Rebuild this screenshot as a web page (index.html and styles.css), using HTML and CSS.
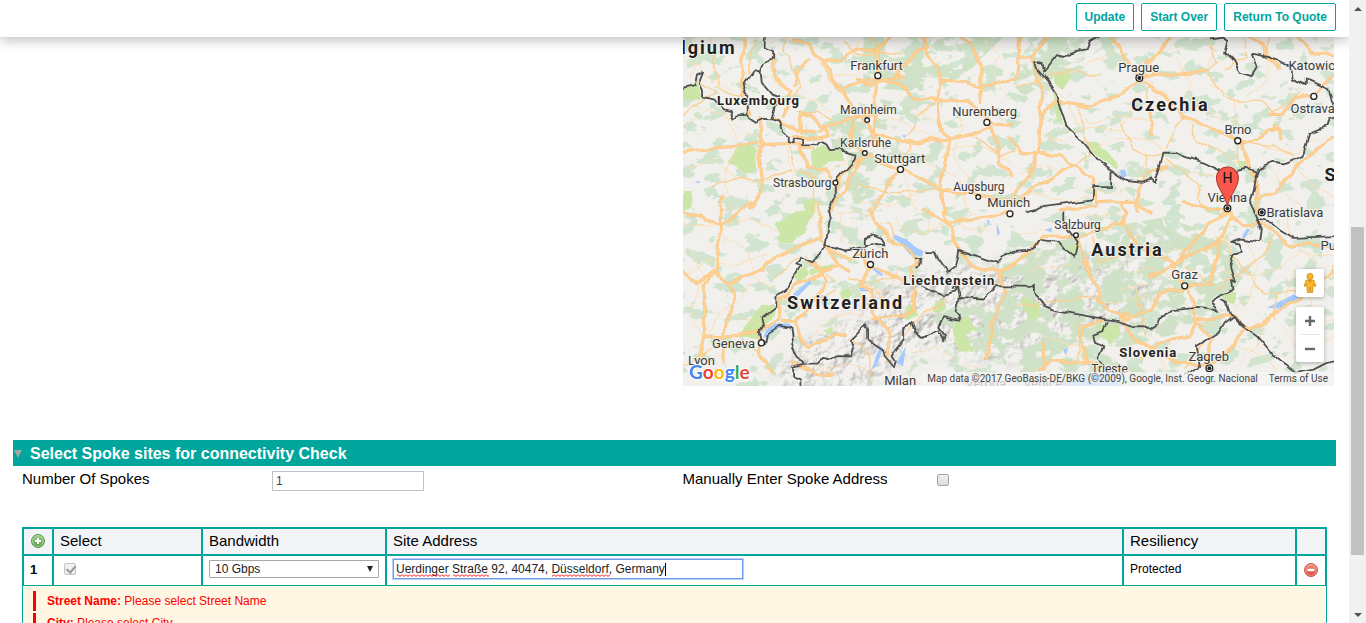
FILE: index.html
```html
<!DOCTYPE html>
<html lang="en">
<head>
<meta charset="utf-8">
<title>Connectivity Check</title>
<link rel="stylesheet" href="styles.css">
</head>
<body>
<div class="page">
  <header class="toolbar">
    <button type="button" class="action">Update</button>
    <button type="button" class="action">Start Over</button>
    <button type="button" class="action">Return To Quote</button>
  </header>
  <main class="content">
    <section class="columns map-row">
      <div class="cell"></div>
      <div class="cell map-cell">
        <div class="map">
          <svg class="map-art" viewBox="0 0 651 349" role="img" aria-label="Map of Central Europe">
            <defs>
              <filter id="woods" x="0" y="0" width="100%" height="100%" color-interpolation-filters="sRGB">
                <feTurbulence type="fractalNoise" baseFrequency="0.05 0.07" numOctaves="4" seed="11"/>
                <feColorMatrix values="0 0 0 0 0.82  0 0 0 0 0.896  0 0 0 0 0.81  22 0 0 0 -12.8"/>
                <feComposite in2="SourceGraphic" operator="in"/>
              </filter>
              <filter id="forest" x="0" y="0" width="100%" height="100%" color-interpolation-filters="sRGB">
                <feTurbulence type="fractalNoise" baseFrequency="0.05 0.07" numOctaves="4" seed="4"/>
                <feColorMatrix values="0 0 0 0 0.81  0 0 0 0 0.887  0 0 0 0 0.78  14 0 0 0 -6.3"/>
                <feComposite in2="SourceGraphic" operator="in"/>
              </filter>
              <filter id="relief" x="0" y="0" width="100%" height="100%" color-interpolation-filters="sRGB">
                <feTurbulence type="fractalNoise" baseFrequency="0.07" numOctaves="4" seed="8" result="n"/>
                <feDiffuseLighting in="n" surfaceScale="6" diffuseConstant="1.15" lighting-color="#ffffff">
                  <feDistantLight azimuth="225" elevation="58"/>
                </feDiffuseLighting>
                <feComposite in2="SourceGraphic" operator="in"/>
              </filter>
              <filter id="wander" filterUnits="userSpaceOnUse" x="-60" y="-60" width="2080" height="1180" color-interpolation-filters="sRGB">
                <feTurbulence type="fractalNoise" baseFrequency="0.025" numOctaves="1" seed="3"/>
                <feDisplacementMap in="SourceGraphic" scale="24" xChannelSelector="R" yChannelSelector="G"/>
                <feGaussianBlur stdDeviation="1"/>
              </filter>
              <filter id="soft"><feGaussianBlur stdDeviation="7"/></filter>
              <mask id="alps"><path filter="url(#soft)" fill="#fff" d="M125 300L165 285 195 252 240 235 270 230 330 225 400 215 450 222 480 240 460 275 420 290 370 300 330 325 290 322 245 310 215 325 190 349 95 349 95 330Z"/></mask>
            </defs>
            <rect width="651" height="349" fill="#f2f0ed"/>
            <rect width="651" height="349" filter="url(#woods)"/>
            <g mask="url(#alps)">
              <rect width="651" height="349" fill="#edebe7"/>
              <rect width="651" height="349" filter="url(#relief)" opacity=".3"/>
            </g>
            <path filter="url(#forest)" d="M320 225L400 195 480 180 540 200 560 240 520 290 440 310 390 305 500 349 330 349 310 300ZM180 0L320 0 280 40 235 55 180 50ZM165 115L190 115 185 160 165 175ZM145 85L185 75 180 110 150 115ZM190 60L230 70 210 95 190 90ZM325 40L360 0 440 0 380 35 340 60ZM250 280L300 255 330 260 310 320 260 300Z"/>

            <g transform="translate(0 -1) scale(.33333)">
              <g filter="url(#wander)" fill="#cbe6a6">
                <path d="M0 155L45 140 60 185 20 195 0 190ZM155 340L190 325 225 340 220 395 190 415 160 385 140 375ZM380 355L415 325 455 345 480 340 480 370 420 390 385 392ZM0 465L25 465 25 510 0 528ZM365 495L400 490 395 528 365 528Z"/>
                <path d="M275 560L310 540 345 525 390 525 365 590 325 620 280 615 295 585ZM180 875L235 810 270 800 275 835 240 870 225 905 170 900ZM335 720L370 685 380 705 350 745ZM465 770L500 752 508 780 480 795ZM385 695L450 685 445 700 380 715ZM425 880L448 872 450 895 430 895ZM665 815L690 800 700 845 670 850ZM745 810L780 785 785 820 760 830ZM820 850L860 835 880 880 850 900 870 950 830 945 810 890Z"/>
                <path d="M1110 120L1155 97 1165 130 1140 160 1110 140ZM1105 165L1125 195 1140 265 1120 245ZM1200 315L1250 320 1300 380 1300 402 1250 370ZM1665 375L1690 375 1690 390 1665 400ZM1240 870L1300 860 1315 890 1280 925 1250 895ZM1015 790L1070 795 1075 840 1040 850ZM1620 765L1660 770 1650 805 1620 790ZM1150 630L1180 625 1170 655Z"/>
              </g>
              <g fill="#a4caff">
                <path d="M635 595L670 610 700 635 722 645 715 660 680 655 655 625 632 607ZM618 620L640 618 625 612ZM250 880L275 862 320 862 325 875 285 875 255 900 240 905ZM330 775L380 730 385 740 345 780ZM530 755L570 758 568 765 530 765ZM565 1000L590 930 600 935 580 990ZM640 980L668 930 660 990ZM910 550L920 555 915 567ZM940 560L950 590 942 600ZM570 690L600 715 595 720 568 700Z"/>
                <path d="M1676 600L1690 577 1700 580 1682 610ZM1750 815L1830 775 1850 785 1790 818ZM1310 405L1325 400 1330 420 1315 425ZM1085 580L1105 575 1105 590ZM1140 940L1155 935 1147 958ZM1100 1038L1190 1020 1250 1005 1300 1010 1310 1050 1100 1050ZM655 298L670 297 665 306ZM35 437L50 435 48 442Z"/>
              </g>
              <g filter="url(#wander)">
              <g fill="none" stroke="#fddcae" stroke-width="2.5" stroke-linejoin="round">
                <path d="M0 75L50 90 90 140 150 160M30 0L50 60 20 130M0 280L70 220 130 240 190 290 230 300M10 400L90 370 160 430 235 440 300 410 370 400M110 200L170 330 120 420 150 528M260 120L330 180 390 190 450 230M420 110L520 120 560 90 640 60M640 170L710 230 760 260M600 240L660 260 720 290 800 340 900 330 980 380M820 200L840 270 810 350 850 430 900 470M900 0L950 60 930 130 980 190M640 330L690 380 760 390 820 420M310 330L330 420 290 500M380 420L450 400 500 360M510 60L530 10M480 430L530 500 610 510 700 470M660 420L700 528M850 528L830 430"/>
                <path d="M0 560L100 570 200 550 300 590M0 720L80 670 150 690 260 650M20 640L60 720 20 820 60 900M120 600L200 650 210 720 270 760M130 820L190 850 230 870M80 890L110 820 180 790 200 740M40 1000L110 960 150 1030M470 528L480 620 540 640M580 560L650 570 720 590 800 560 880 530M460 540L520 520 590 560M480 730L540 790 600 820M380 900L440 850 500 830 560 850 590 840M640 528L660 600M750 528L730 600M820 528L840 570 910 580M520 880L580 930 640 960M650 700L620 760 560 780M350 950L430 1000 500 980 560 1010M690 950L760 930 830 980 890 990"/>
                <path d="M1010 60L1080 100 1170 110 1260 60 1330 20M1060 130L1150 190 1180 270 1300 240 1400 250M1150 290L1240 270 1310 290 1340 230 1370 170M1200 350L1290 310 1390 310 1450 350M1390 130L1480 200 1570 220 1620 260M1480 60L1520 150 1500 230M1570 100L1590 40 1560 0M1580 140L1650 190 1650 260 1700 290M1390 360L1360 430 1310 470 1200 460M1410 370L1520 410 1600 420M1690 180L1740 150 1760 90M1740 330L1830 360 1900 300M1820 370L1900 460 1953 480M1770 420L1830 500 1900 528M1690 60L1640 110M1820 170L1830 250M1080 290L1150 330M1010 410L1080 380 1140 410M1050 470L1160 500 1230 470"/>
                <path d="M1000 600L1080 580 1160 600 1220 560M1300 640L1400 660 1460 640 1560 650 1640 600M1190 540L1290 530 1370 580M1350 700L1440 700 1470 740M1310 760L1400 740M1040 700L1120 690 1220 680M1200 780L1280 800 1390 780M1500 800L1550 860 1620 870M1610 700L1700 720 1780 700 1850 650 1953 660M1690 600L1720 690 1700 780 1650 820M1800 528L1830 620 1900 680M1740 850L1720 930 1660 990M1800 870L1850 950 1953 900M1830 700L1800 800M1650 920L1750 960 1800 1050M1340 920L1420 930 1450 1010M1080 900L1180 930 1220 980M1880 780L1900 880 1953 850"/>
              </g>
              <g fill="none" stroke="#fbcf92" stroke-width="4" stroke-linejoin="round">
                <path d="M80 0L100 45 85 75 105 120 110 160 170 175 200 120 200 60 220 0M40 130L100 170 60 190 0 240M300 235L350 150 330 90 300 50 310 0M410 75L440 130 480 165M320 330L340 400 400 430 455 440M85 450L140 430 235 430 330 400M345 230L400 225 450 255M640 100L700 50 740 30M560 0L590 45 650 50M480 20L530 60 580 50M680 300L700 240 765 190M680 320L650 400M400 430L385 528M880 300L950 360 990 350M520 440L620 470 700 460 770 465"/>
                <path d="M270 730L300 700 350 660M340 860L380 800 460 760M370 655L420 700 450 740M500 720L580 760 620 800M610 560L640 620M640 720L560 740M500 900L560 960 560 1030M660 900L720 830 790 790M0 985L100 930 170 920 230 940"/>
                <path d="M1000 150L1070 130 1160 100 1250 120M1180 210L1200 270 1220 360 1170 390M1390 155L1400 220M1310 265L1350 340 1385 360 1450 350 1480 260 1510 240M1580 30L1600 80 1560 110M1575 110L1620 180 1670 200 1730 190 1780 235M1525 260L1530 310 1610 350 1660 380M1660 320L1670 380M1700 320L1770 330 1830 360M1385 350L1390 420 1360 490M1450 370L1540 440 1550 500 1610 528M1680 0L1690 60 1620 100M1760 0L1750 40 1790 100M1850 170L1790 220 1760 230"/>
                <path d="M1230 600L1250 680 1310 660 1370 600M1390 900L1360 800M1610 600L1740 780 1780 770 1900 760 1953 690M1770 590L1750 650 1640 730 1610 760M1780 770L1770 850M1370 830L1360 760M1190 980L1180 850M1500 1000L1560 920M1000 810L1090 800 1160 790 1250 780M1500 690L1610 760"/>
              </g>
              <g fill="none" stroke="#f8c27c" stroke-width="9" stroke-linejoin="round" stroke-linecap="round">
                <path id="m1" d="M230 245L238 300 230 370 238 430 232 470 200 515M0 348L90 335 180 330 238 312 243 325 320 322 390 340M200 235L175 170 185 120 175 75 190 0M270 245L300 265 350 285 390 290M352 232L355 290M352 235L385 235 415 270 470 262 505 245 570 235M330 300L380 310 435 300 430 275 410 285M270 60L275 120 320 165 300 240M330 10L375 25 390 50 420 70 470 75 520 40 590 45M380 75L345 95 335 150M420 75L445 120 475 160 505 210 520 240 505 290 515 330 545 350M620 0L585 45 583 120 572 180 575 315M475 160L520 140 580 130 640 140 700 185 765 190 850 195 890 225 925 260 990 265M520 130L550 150 610 130 660 120M720 0L730 50 755 90 775 130 765 190 770 285 800 310 790 370 770 450 770 480 790 530M825 0L865 25 890 90 890 155 895 200M775 135L845 140 890 155 990 130M640 120L690 60 730 30M540 250L570 290 620 305 700 320 800 308 870 295 920 270 940 310 950 380 985 420M545 355L490 400 455 460M545 350L600 380 650 400 720 430 770 465 880 475 990 495M650 405L610 450 570 530M350 322L370 395 430 400 450 440M545 355L500 430 440 528"/>
                <path id="m2" d="M0 530L60 545 110 570 100 700 60 750 65 880 50 960M110 570L150 545 200 500M0 700L40 745 90 705 130 740 240 700 250 680 330 640 410 605 440 645 465 690 500 700M130 740L155 780 120 900 120 980M65 895L130 900 220 885 290 850 290 790 340 750 400 720M300 855L340 860 345 900 370 930 460 900 490 895M340 860L370 820 430 740 410 700 380 675M405 500L410 560 415 605M440 640L500 670 540 650 550 690 620 710 660 735M465 690L430 700 390 730M560 700L530 750 570 765 570 830 620 890 610 970M560 520L590 570 620 610 690 650 710 680 680 700 695 760 685 830 570 850M230 900L230 960 270 1010M330 980L400 1015 450 1010M720 520L800 570 815 620 870 690 950 705 990 690M780 528L790 560 930 540 980 525M950 705L965 760 930 860 910 970M110 560L120 480"/>
                <path id="m3" d="M1010 0L1005 60 1000 130M1010 60L1050 60 1090 0M1050 60L1075 160 1065 350M1080 235L1120 195 1220 210 1310 180 1340 150 1370 130 1320 60 1290 0M1370 130L1430 170 1500 240 1570 270 1665 315M1370 130L1410 115 1540 115 1560 105M1385 85L1410 70 1460 10M1400 220L1405 300M1665 315L1700 320 1760 280 1785 280 1790 310M1780 280L1770 270M1670 315L1690 370 1720 440 1720 528M1760 235L1800 235 1830 190 1880 180 1953 120M1690 0L1740 35 1780 100M1840 0L1880 45 1953 60M1000 495L1080 440 1160 390M990 480L1040 410 1060 350 1130 360 1170 390 1230 430 1240 500 1360 495 1360 528M1130 520L1240 510M1360 495L1390 410 1450 395M1360 500L1400 528M1630 525L1500 500M1720 525L1720 490 1770 470 1830 400 1890 350 1953 300M980 300L1010 350 1060 350"/>
                <path id="m4" d="M980 690L1060 630 1080 600 1180 600 1205 680 1230 730 1250 760 1240 790 1290 830 1330 845 1410 820 1430 770 1500 760M1200 600L1290 565 1310 570 1330 530 1310 500M1320 560L1360 630 1430 660 1460 680 1500 740 1530 800 1540 860 1580 910 1570 970M1470 690L1500 670 1600 620 1630 570 1640 530M1500 750L1580 740 1610 620M1640 540L1680 570 1720 560 1760 575 1820 630 1880 620 1953 640M1630 530L1580 560 1480 680 1400 720M1260 850L1200 870 1190 910 1210 980 1140 980 1100 970 1070 1000M1310 845L1350 910 1400 930 1380 970M1400 940L1450 910 1520 900 1540 850 1600 845 1650 835 1700 880 1740 860 1780 820 1850 790 1953 705M1680 880L1640 940 1590 980M1400 930L1440 960 1500 980 1580 985M1310 840L1340 830M1210 980L1260 990 1310 1000M1080 1000L1080 920"/>
              </g>
              <g fill="none" stroke="#ffd194" stroke-width="6" stroke-linejoin="round" stroke-linecap="round"><use href="#m1"/><use href="#m2"/><use href="#m3"/><use href="#m4"/></g>
              <g fill="none" stroke="#505050" stroke-width="5.5" stroke-linejoin="round">
                <path d="M245 0L245 35 270 45 270 72 243 85 233 110 215 105 190 140 180 165 193 180 190 240M233 110L236 140 270 180 282 185 277 215 268 248M0 158L35 150 42 115 63 107 50 140 60 160 60 182 90 190 120 220 140 225 148 248 165 240 190 240 215 257 235 248 268 250 290 257 300 285 317 300 317 318 332 322 332 308 360 312 360 327 400 328 412 316 430 325 440 342 470 340 480 347 517 358 515 370 455 440 455 490 435 528 440 550 427 630"/>
                <path d="M427 630L450 632 485 643 545 632M545 630L545 605 570 595 595 605 607 625 570 618 545 628M427 630L410 660 390 675 355 660 340 685 355 690 330 730 315 755 280 780 280 810 235 845 240 870 230 885 235 910 250 920 255 890 290 868 325 875 330 920 340 950 360 985 365 985 400 985 420 965 445 970 465 960 500 960 510 925 505 910 545 870 555 880 555 910 600 940 605 960 630 990 635 975 625 960 660 910 660 870 685 860 695 890 720 905 765 885 780 912 785 900 765 875 780 840 825 850 830 840 820 830 830 785 895 790 915 770 930 765 940 750 1045 752 1055 745 1055 770 1075 790 1085 810 1110 820 1160 830 1300 855 1350 870 1385 870 1405 880 1425 865 1430 845 1470 822 1540 815 1585 820 1605 830 1585 792 1650 760 1645 735 1655 740 1640 690 1650 655 1675 650 1665 625 1640 620 1670 610 1730 618 1735 580 1720 550 1765 560 1790 580 1830 605 1953 600"/>
                <path d="M700 660L718 665 710 690 700 700M700 740L740 760 780 775 820 765 825 745 810 760M825 750L830 790M730 645L755 645 770 680 790 710 815 690 825 640 880 660 940 680 980 645 1055 640 1070 615 1130 620 1150 645 1173 665 1183 620 1140 560 1140 525M1030 530L1080 510 1228 490 1230 450 1283 450 1285 405 1240 370 1190 310 1150 270 1130 210 1105 150 1060 95 1055 75 1075 80 1080 105 1120 55 1140 60 1180 45 1210 40 1220 15 1245 0M1285 405L1330 435 1380 440 1405 430 1415 440 1430 395 1440 350 1480 350 1500 360 1560 380 1600 400 1620 408 1690 395 1720 410 1710 470 1700 500 1720 540 1730 580M1715 425L1725 400 1770 380 1800 385 1860 360 1880 290 1930 270 1935 250 1953 245M1580 10L1620 5 1635 15 1625 50 1650 75 1670 110 1705 120 1720 95 1705 50 1760 60 1790 80 1820 85 1825 130 1870 150 1870 130 1935 160 1945 200 1953 210"/>
                <path d="M1270 855L1260 885 1230 895 1235 920 1260 930 1240 970 1265 990M1500 1020L1550 990 1540 930 1610 885 1625 860 1650 840 1690 880 1720 900 1770 960 1840 1010 1890 1000 1930 980 1953 975M1610 790L1630 800 1640 830 1690 870M360 985L330 995 330 1020 352 1030 352 1050"/>
              </g>
              </g>
              <g fill="#fff" stroke="#222" stroke-width="4">
                <circle cx="584" cy="119" r="9"/><circle cx="552" cy="252" r="7"/><circle cx="545" cy="351" r="7"/><circle cx="652" cy="400" r="9"/><circle cx="911" cy="259" r="9"/><circle cx="457" cy="440" r="7"/><circle cx="885" cy="483" r="7"/><circle cx="980" cy="533" r="9"/><circle cx="562" cy="685" r="9"/><circle cx="235" cy="920" r="9"/><circle cx="1891" cy="181" r="9"/><circle cx="1663" cy="314" r="9"/><circle cx="1178" cy="597" r="7"/><circle cx="1504" cy="749" r="9"/>
                <circle cx="1368" cy="126" r="10"/><circle cx="1632" cy="516" r="10"/><circle cx="1735" cy="528" r="10"/><circle cx="1578" cy="996" r="10"/>
              </g>
              <g fill="#222"><circle cx="1368" cy="126" r="6"/><circle cx="1632" cy="516" r="6"/><circle cx="1735" cy="528" r="6"/><circle cx="1578" cy="996" r="6"/></g>
            </g>

            <g class="city">
              <text x="167" y="33">Frankfurt</text>
              <text x="269" y="79">Nuremberg</text>
              <text x="191" y="126">Stuttgart</text>
              <text x="304" y="170">Munich</text>
              <text x="435" y="35">Prague</text>
              <text x="541" y="97">Brno</text>
              <text x="605" y="33">Katowice</text>
              <text x="607" y="76">Ostrava</text>
              <text x="524" y="165">Vienna</text>
              <text x="583" y="180">Bratislava</text>
              <text x="169" y="221">Zürich</text>
              <text x="29" y="311">Geneva</text>
              <text x="5" y="328">Lyon</text>
              <text x="201" y="348">Milan</text>
              <text x="488" y="242">Graz</text>
              <text x="505" y="324">Zagreb</text>
              <text x="637" y="213">Pula</text>
              <text x="282" y="351">Verona</text>
              <text x="340" y="351">Venice</text>
            </g>
            <g class="city town">
              <text x="157" y="77">Mannheim</text>
              <text x="157" y="110">Karlsruhe</text>
              <text x="90" y="150">Strasbourg</text>
              <text x="270" y="154">Augsburg</text>
              <text x="371" y="192">Salzburg</text>
              <text x="408" y="336">Trieste</text>
            </g>
            <g class="country">
              <text x="-2" y="17">lgium</text>
              <text x="448" y="74">Czechia</text>
              <text x="408" y="219">Austria</text>
              <text x="104" y="272">Switzerland</text>
              <text x="641" y="144">S</text>
            </g>
            <g class="country small">
              <text x="34" y="68">Luxembourg</text>
              <text x="220" y="248">Liechtenstein</text>
              <text x="436" y="320">Slovenia</text>
            </g>
            <path d="M544 170C543 158 533 152 533 141A11 11 0 0 1 555 141C555 152 545 158 544 170Z" fill="#f8574b" stroke="#b33a33" stroke-width="1"/>
            <text class="pin" x="544" y="146">H</text>
            <text class="logo" x="6" y="342"><tspan fill="#4285f4">G</tspan><tspan fill="#ea4335">o</tspan><tspan fill="#fbbc05">o</tspan><tspan fill="#4285f4">g</tspan><tspan fill="#34a853">l</tspan><tspan fill="#ea4335">e</tspan></text>
          </svg>
          <div class="map-controls">
            <button type="button" class="map-button pegman" aria-label="Street View">
              <svg width="14" height="20" viewBox="0 0 14 20"><circle cx="7" cy="3.5" r="3.1" fill="#f9b224" stroke="#c98410" stroke-width=".7"/><path d="M3.3 7H10.700L13 13 11.600 13.500 10.300 11 9.700 19.500H7.500L7 14 6.500 19.500H4.300L3.700 11 2.400 13.500 1 13Z" fill="#fbb829" stroke="#c98410" stroke-width=".7"/><path d="M5 7.500H9L7 10Z" fill="#e38c17"/></svg>
            </button>
            <div class="zoom">
              <button type="button" class="map-button" aria-label="Zoom in"><svg width="12" height="12" viewBox="0 0 12 12"><path d="M6 1V11M1 6H11" stroke="#666" stroke-width="2.4"/></svg></button>
              <span class="divider"></span>
              <button type="button" class="map-button" aria-label="Zoom out"><svg width="12" height="12" viewBox="0 0 12 12"><path d="M1 6H11" stroke="#666" stroke-width="2.4"/></svg></button>
            </div>
          </div>
          <div class="credits"><span>Map data ©2017 GeoBasis-DE/BKG (©2009), Google, Inst. Geogr. Nacional</span><a href="#terms">Terms of Use</a></div>
        </div>
      </div>
    </section>

    <h2 class="section-title"><span class="twisty"></span>Select Spoke sites for connectivity Check</h2>
    <div class="columns fields">
      <div class="cell field">
        <label for="spokes">Number Of Spokes</label>
        <input id="spokes" class="text-box count" type="text" value="1">
      </div>
      <div class="cell field second">
        <label for="manual">Manually Enter Spoke Address</label>
        <input id="manual" class="tick" type="checkbox">
      </div>
    </div>

    <div class="sites">
      <table class="grid">
        <colgroup><col class="c-num"><col class="c-select"><col class="c-band"><col><col class="c-res"><col class="c-del"></colgroup>
        <thead>
          <tr>
            <th class="icon-cell"><button type="button" class="round-button" aria-label="Add site"><svg width="14" height="14" viewBox="0 0 14 14"><defs><linearGradient id="gr" x2="0" y2="1"><stop stop-color="#a5cf8c"/><stop offset="1" stop-color="#4f9a45"/></linearGradient></defs><circle cx="7" cy="7" r="6.500" fill="url(#gr)" stroke="#5b9950"/><circle cx="7" cy="7" r="5.300" fill="none" stroke="#b7dba6" stroke-width=".8"/><path d="M7 4V10M4 7H10" stroke="#fff" stroke-width="2"/></svg></button></th>
            <th>Select</th><th>Bandwidth</th><th>Site Address</th><th>Resiliency</th><th></th>
          </tr>
        </thead>
        <tbody>
          <tr>
            <td class="row-number">1</td>
            <td><input type="checkbox" class="tick row-tick" checked disabled aria-label="Select site 1"></td>
            <td><select class="bandwidth" aria-label="Bandwidth"><option>10 Gbps</option></select></td>
            <td><div class="address-wrap"><input class="address" type="text" spellcheck="false" aria-label="Site Address" value="Uerdinger Straße 92, 40474, Düsseldorf, Germany"><svg class="marks" width="350" height="20" viewBox="0 0 350 20" aria-hidden="true"><defs><pattern id="wave" width="4" height="3" patternUnits="userSpaceOnUse" y="15"><path d="M0 .5L2 2.500 4 .5" fill="none" stroke="#f00" stroke-width="1"/></pattern></defs><path fill="url(#wave)" d="M3 15h53v3h-53zM59 15h36v3h-36zM158 15h58v3h-58z"/><path fill="#000" d="M271 4h1v13h-1z"/></svg></div></td>
            <td>Protected</td>
            <td class="icon-cell"><button type="button" class="round-button" aria-label="Remove site"><svg width="14" height="14" viewBox="0 0 14 14"><defs><linearGradient id="rd" x2="0" y2="1"><stop stop-color="#ee9a89"/><stop offset="1" stop-color="#d93c2c"/></linearGradient></defs><circle cx="7" cy="7" r="6.500" fill="url(#rd)" stroke="#d2564a"/><circle cx="7" cy="7" r="5.300" fill="none" stroke="#f3aaa0" stroke-width=".8"/><path d="M3.500 7H10.500" stroke="#fff" stroke-width="2.400"/></svg></button></td>
          </tr>
        </tbody>
      </table>
      <div class="errors">
        <p class="error"><b>Street Name:</b> Please select Street Name</p>
        <p class="error"><b>City:</b> Please select City</p>
      </div>
    </div>
  </main>
</div>
<div class="scrollbar" aria-hidden="true"><span class="arrow up"></span><span class="track"><span class="thumb"></span></span><span class="arrow down"></span></div>
</body>
</html>
```
FILE: styles.css
```css
* { box-sizing: border-box; }
body {
  margin: 0;
  height: 100vh;
  display: flex;
  overflow: hidden;
  background: #fff;
  color: #000;
  font: 12px/16px "Liberation Sans", Arial, sans-serif;
}
button, input, select { font: inherit; }
.page { flex: 1; min-width: 0; height: 100vh; overflow: hidden; }
.toolbar {
  position: relative;
  z-index: 2;
  display: flex;
  justify-content: flex-end;
  gap: 7px;
  padding: 3px 13px 6px;
  background: #fff;
  box-shadow: 0 2px 14px rgba(0, 0, 0, .3);
}
.action {
  height: 28px;
  padding: 0 8px;
  border: 1px solid #00a59b;
  border-radius: 2px;
  background: #fff;
  color: #00a59b;
  font-weight: bold;
  line-height: 18px;
}
.content { padding: 0 13px; }
.columns { display: grid; grid-template-columns: 1fr 1fr; }
.cell { padding-left: 9px; }
.map-cell { padding: 0 2px 0 8px; }
.map-row { padding-bottom: 54px; }
.map { position: relative; overflow: hidden; }
.map-art { display: block; width: 100%; height: auto; }
.city {
  font: 13px Roboto, sans-serif;
  fill: #3a3a3a;
  stroke: #f6f4f0;
  stroke-width: 2px;
  stroke-opacity: .8;
  paint-order: stroke;
}
.town { font-size: 12px; }
.country {
  font: bold 18px Roboto, sans-serif;
  letter-spacing: 2px;
  fill: #222;
  stroke: #f6f4f0;
  stroke-width: 2px;
  paint-order: stroke;
}
.small { font-size: 13px; letter-spacing: 1px; }
.pin { font: 14px Roboto, sans-serif; text-anchor: middle; fill: #111; }
.logo {
  font: bold 19px Lato, sans-serif;
  stroke: #fff;
  stroke-width: 2px;
  paint-order: stroke;
}
.map-controls {
  position: absolute;
  right: 10px;
  bottom: 24px;
  display: grid;
  gap: 10px;
}
.map-button {
  width: 28px;
  height: 27px;
  padding: 0;
  display: grid;
  place-items: center;
  border: 0;
  background: none;
}
.map-controls .pegman { height: 28px; }
.pegman, .zoom {
  background: #fff;
  border-radius: 2px;
  box-shadow: 0 1px 4px rgba(0, 0, 0, .3);
}
.zoom { display: grid; justify-items: center; }
.divider { width: 19px; height: 1px; background: #e6e6e6; }
.credits {
  position: absolute;
  right: 0;
  bottom: 0;
  display: flex;
  gap: 11px;
  padding: 0 6px 0 5px;
  background: rgba(245, 245, 245, .75);
  color: #444;
  font: 10px/14px Roboto, sans-serif;
  white-space: nowrap;
}
.credits a { color: inherit; text-decoration: none; }
.section-title {
  display: flex;
  align-items: center;
  gap: 8px;
  margin: 0;
  height: 26px;
  padding-top: 2px;
  background: #00a59b;
  color: #fff;
  font-size: 16px;
}
.twisty {
  margin-left: 1px;
  border: 4px solid transparent;
  border-top: 8px solid #9fa7a5;
  border-bottom: 0;
}
.fields { padding-bottom: 35px; }
.field {
  display: grid;
  grid-template-columns: 250px 1fr;
  font-size: 15px;
  line-height: 26px;
}
.second { padding-left: 8px; }
.text-box {
  width: 152px;
  height: 20px;
  margin-top: 5px;
  padding: 0 3px;
  border: 1px solid #c3c3c3;
  color: #444;
  font-size: 12px;
}
.tick {
  appearance: none;
  width: 12px;
  height: 12px;
  margin: 8px 4px 0;
  border: 1px solid #a5a5a5;
  border-radius: 2px;
  background: linear-gradient(#f0f0f0, #dcdcdc);
}
.row-tick {
  display: block;
  margin: 0 4px;
  border-color: #c4c4c4;
  background: #f0f0f0;
}
.row-tick::after {
  content: "";
  display: block;
  width: 4px;
  height: 7px;
  margin: 0 0 0 3px;
  border: solid #999;
  border-width: 0 2px 2px 0;
  transform: rotate(40deg);
}
.sites { margin: 0 9px; }
.grid { width: 100%; table-layout: fixed; border-collapse: collapse; }
.c-num { width: 30px; }
.c-select { width: 149px; }
.c-band { width: 184px; }
.c-res { width: 173px; }
.c-del { width: 30px; }
.grid th, .grid td { padding: 0 6px 1px; border: 2px solid #00a59b; text-align: left; }
.grid th { height: 27px; background: #f2f4f8; font-size: 15px; font-weight: normal; }
.grid td { height: 30px; padding-bottom: 3px; border-bottom-width: 1px; }
.grid .row-number { padding-bottom: 1px; font-size: 13px; font-weight: bold; }
.grid .icon-cell { padding: 0 0 2px; text-align: center; }
.round-button {
  display: block;
  width: 14px;
  height: 14px;
  margin: 0 auto;
  padding: 0;
  border: 0;
  background: none;
}
.round-button svg { display: block; }
.bandwidth {
  appearance: none;
  display: block;
  width: 100%;
  height: 18px;
  padding: 0 5px;
  border: 1px solid #a6a6a6;
  border-radius: 1px;
  background: #fff;
  color: #222;
}
td:has(.bandwidth) { position: relative; }
td:has(.bandwidth)::after {
  content: "";
  position: absolute;
  right: 12px;
  top: 10px;
  border: 3px solid transparent;
  border-top: 6px solid #222;
  border-bottom: 0;
}
.address-wrap { position: relative; width: 350px; }
.address {
  display: block;
  width: 100%;
  height: 20px;
  padding: 0 2px;
  border: 1px solid #6d9be8;
  outline: 1px solid #b8d0f7;
  color: #222;
}
.marks { position: absolute; left: 1px; top: 0; }
.errors {
  display: grid;
  gap: 2px;
  padding: 5px 10px;
  border: solid #00a59b;
  border-width: 0 1px;
  background: #fff6e4;
  color: #f00;
}
.error {
  margin: 0;
  height: 20px;
  padding-left: 11px;
  border-left: 3px solid #f00;
  line-height: 20px;
}
.scrollbar {
  width: 17px;
  display: flex;
  flex-direction: column;
  align-items: center;
  background: #f1f1f1;
  padding: 7px 0 6px;
}
.arrow { border: 4px solid transparent; }
.up { border-top: 0; border-bottom-color: #505050; }
.down { border-bottom: 0; border-top-color: #505050; }
.track { flex: 1; width: 13px; padding-top: 216px; }
.thumb { display: block; height: 328px; background: #c1c1c1; }
```
